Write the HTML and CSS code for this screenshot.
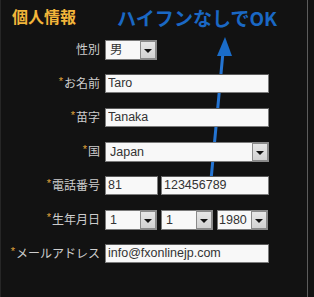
FILE: index.html
```html
<!DOCTYPE html>
<html lang="ja">
<head>
    <meta charset="UTF-8">
    <title>個人情報</title>
    <link rel="stylesheet" href="styles.css">
</head>
<body>
<div class="panel">
    <svg class="arrow" width="308" height="297" viewBox="0 0 308 297">
        <line x1="211" y1="180" x2="223" y2="52" stroke="#2474d2" stroke-width="3"/>
        <polygon points="225,37 217,56 232,56" fill="#1a6cc8"/>
    </svg>
    <div class="head">
        <h2 class="title">個人情報</h2>
        <p class="note">ハイフンなしでOK</p>
    </div>
    <div class="form">
        <label class="lbl">性別</label>
        <div class="field">
            <span class="sel w52"><select><option>男</option><option>女</option></select><span class="drop"></span></span>
        </div>

        <label class="lbl"><span class="req">*</span>お名前</label>
        <div class="field"><input class="txt w164" type="text" value="Taro"></div>

        <label class="lbl"><span class="req">*</span>苗字</label>
        <div class="field"><input class="txt w164" type="text" value="Tanaka"></div>

        <label class="lbl"><span class="req">*</span>国</label>
        <div class="field">
            <span class="sel w164"><select><option>Japan</option></select><span class="drop"></span></span>
        </div>

        <label class="lbl"><span class="req">*</span>電話番号</label>
        <div class="field">
            <input class="txt w53" type="text" value="81">
            <input class="txt w108" type="text" value="123456789">
        </div>

        <label class="lbl"><span class="req">*</span>生年月日</label>
        <div class="field gap4">
            <span class="sel w52"><select><option>1</option></select><span class="drop"></span></span>
            <span class="sel w52"><select><option>1</option></select><span class="drop"></span></span>
            <span class="sel w51 tight"><select><option>1980</option></select><span class="drop"></span></span>
        </div>

        <label class="lbl"><span class="req">*</span>メールアドレス</label>
        <div class="field"><input class="txt w164" type="text" value="info@fxonlinejp.com"></div>
    </div>
</div>
</body>
</html>
```

FILE: styles.css
```css
*{
    margin: 0;
    padding: 0;
    box-sizing: border-box;
}
body{
    background: #121212;
    font-family: "Noto Sans CJK JP", "Noto Sans", sans-serif;
}
.panel{
    position: relative;
    width: 308px;
    height: 297px;
    border-left: 1px solid #262626;
    border-right: 1px solid #5c5c5c;
}
.arrow{
    position: absolute;
    left: -1px;
    top: 0;
    z-index: 0;
}
.head{
    display: flex;
    align-items: flex-start;
    height: 39px;
    padding: 6px 0 0 11px;
}
.title{
    font-size: 16px;
    line-height: 20px;
    font-weight: bold;
    color: #f2b53a;
}
.note{
    margin: 1px 0 0 41px;
    font-size: 19px;
    line-height: 22px;
    font-weight: bold;
    color: #1a68c4;
}
.form{
    position: relative;
    z-index: 1;
    display: grid;
    grid-template-columns: 99px 1fr;
    grid-auto-rows: 20px;
    column-gap: 5px;
    row-gap: 14px;
    align-items: center;
}
.lbl{
    justify-self: end;
    font-size: 12px;
    line-height: 16px;
    color: #cdcdcd;
    white-space: nowrap;
}
.req{
    font-family: "Liberation Sans", sans-serif;
    font-size: 11px;
    color: #e0a63c;
    vertical-align: top;
    position: relative;
    top: -2px;
    margin-right: 1px;
}
.field{
    display: flex;
    gap: 3px;
    height: 19px;
}
.gap4{
    gap: 4px;
}
.txt{
    height: 19px;
    border: 1px solid #7c7c7c;
    border-top-color: #5a5a5a;
    background: #f8f8f8;
    padding: 0 2px;
    font-family: "Liberation Sans", sans-serif;
    font-size: 12.5px;
    color: #333;
    outline: none;
}
.sel{
    display: inline-flex;
    height: 20px;
    border: 1px solid #7a7a7a;
    background: #f8f8f8;
}
.sel select{
    flex: 1;
    width: 0;
    appearance: none;
    -webkit-appearance: none;
    border: 0;
    background: transparent;
    padding: 0 0 0 4px;
    font-family: "Liberation Sans", "Noto Sans CJK JP", sans-serif;
    font-size: 12.5px;
    color: #333;
    outline: none;
}
.sel.tight select{
    padding-left: 1px;
}
.drop{
    width: 17px;
    border: 2px solid #8a8a8a;
    border-left-width: 1px;
    margin: -1px -1px -1px 0;
    background: linear-gradient(#e6e6e6, #d2d2d2);
    display: flex;
    align-items: center;
    justify-content: center;
}
.drop::after{
    content: "";
    border-left: 4px solid transparent;
    border-right: 4px solid transparent;
    border-top: 4px solid #111;
    margin-top: 2px;
}
.w51{ width: 51px; }
.w52{ width: 52px; }
.w53{ width: 53px; }
.w108{ width: 108px; }
.w164{ width: 164px; }
```
